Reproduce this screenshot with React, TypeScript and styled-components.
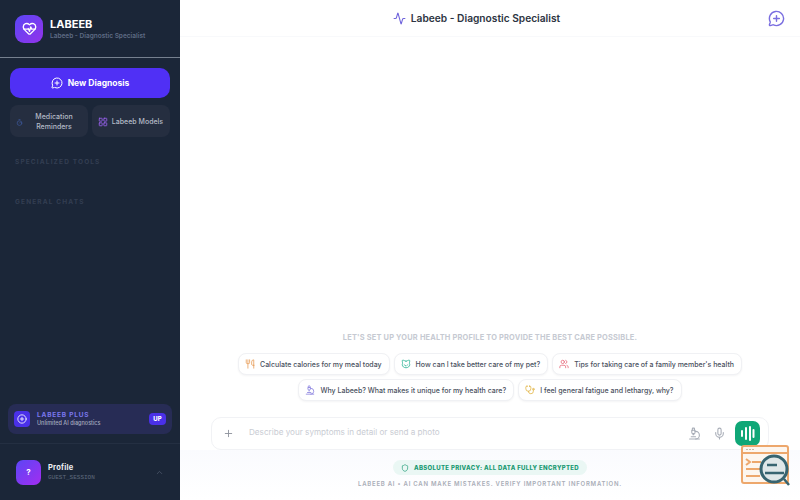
import styled, { createGlobalStyle } from "styled-components";
import {
  Activity,
  Cat,
  ChevronUp,
  CirclePlus,
  HeartPulse,
  LayoutGrid,
  MessageCirclePlus,
  Mic,
  Microscope,
  Plus,
  Shield,
  Stethoscope,
  Timer,
  Users,
  Utensils,
} from "lucide-react";

const GlobalStyle = createGlobalStyle`
  html, body {
    margin: 0;
    height: 100%;
    overflow: hidden;
  }
  body {
    font-family: "Inter", "Liberation Sans", sans-serif;
    background: #fff;
  }
  #root {
    height: 100%;
  }
  * {
    box-sizing: border-box;
  }
`;

const Page = styled.div`
  position: relative;
  display: flex;
  width: 800px;
  height: 500px;
  overflow: hidden;
`;

const Sidebar = styled.aside`
  display: flex;
  flex-direction: column;
  flex: 0 0 180px;
  width: 180px;
  height: 500px;
  background: #1b2638;
  box-shadow: 1px 0 3px rgba(30, 41, 59, 0.1);
`;

const Brand = styled.div`
  display: flex;
  align-items: center;
  gap: 8px;
  height: 58px;
  padding: 0 15px;
  border-bottom: 1px solid #76808f;
`;

const BrandLogo = styled.div`
  display: flex;
  align-items: center;
  justify-content: center;
  width: 28px;
  height: 28px;
  color: #fff;
  background: linear-gradient(135deg, #5b46f5, #9333ea);
  border-radius: 9px;
`;

const BrandText = styled.div`
  display: flex;
  flex-direction: column;
  gap: 1px;
  margin-left: -1px;
  margin-top: 1px;
`;

const BrandName = styled.div`
  color: #fff;
  font-size: 11px;
  font-weight: 700;
  line-height: 14px;
`;

const BrandSub = styled.div`
  color: #5e6b84;
  font-size: 6.5px;
  font-weight: 600;
  line-height: 9px;
  white-space: nowrap;
`;

const SideBody = styled.div`
  display: flex;
  flex-direction: column;
  flex: 1;
  padding: 10px 10px 0;
`;

const NewButton = styled.button`
  display: flex;
  align-items: center;
  justify-content: center;
  gap: 5px;
  width: 160px;
  height: 30px;
  padding: 0;
  color: #fff;
  font-family: inherit;
  font-size: 8.5px;
  font-weight: 700;
  background: #5030f5;
  border: none;
  border-radius: 10px;
`;

const QuickRow = styled.div`
  display: grid;
  grid-template-columns: 78px 78px;
  gap: 4px;
  margin-top: 7px;
`;

const QuickCard = styled.div`
  display: flex;
  align-items: center;
  gap: 3px;
  height: 32px;
  padding: 2px 6px 0;
  font-size: 7px;
  font-weight: 500;
  line-height: 10.5px;
  background: #252e40;
  border-radius: 8px;
`;

const QuickLabel = styled.span<{ $center?: boolean }>`
  flex: 1;
  color: #b4bac6;
  text-align: center;
  white-space: ${({ $center }) => ($center ? "normal" : "nowrap")};
`;

const QuickIcon = styled.span<{ $color: string }>`
  display: flex;
  flex-shrink: 0;
  color: ${({ $color }) => $color};
`;

const SectionTitle = styled.div<{ $gap: number }>`
  margin-top: ${({ $gap }) => $gap}px;
  padding-left: 5px;
  color: #333e52;
  font-size: 6.5px;
  font-weight: 700;
  letter-spacing: 1.15px;
  line-height: 9px;
`;

const PlusCard = styled.div`
  display: flex;
  align-items: center;
  gap: 7px;
  width: 164px;
  height: 30px;
  margin: auto 0 0 -2px;
  padding: 0 6px 0 6px;
  background: #272c55;
  border-radius: 8px;
`;

const PlusIcon = styled.div`
  display: flex;
  align-items: center;
  justify-content: center;
  width: 16px;
  height: 16px;
  color: #fff;
  background: #4a30e8;
  border-radius: 4px;
`;

const PlusText = styled.div`
  flex: 1;
`;

const PlusTitle = styled.div`
  color: #7b78ee;
  font-size: 6.5px;
  font-weight: 700;
  letter-spacing: 0.8px;
  line-height: 8px;
`;

const PlusSub = styled.div`
  color: #a4a9bd;
  font-size: 5.5px;
  font-weight: 500;
  line-height: 9px;
  white-space: nowrap;
`;

const UpBadge = styled.div`
  width: 17px;
  height: 12px;
  color: #fff;
  font-size: 6px;
  font-weight: 800;
  line-height: 12px;
  text-align: center;
  background: #4a30e8;
  border-radius: 4px;
`;

const ProfileRow = styled.div`
  display: flex;
  align-items: center;
  gap: 7px;
  height: 57px;
  margin-top: 9px;
  padding: 0 16px;
  border-top: 1px solid #242f42;
`;

const Avatar = styled.div`
  display: flex;
  align-items: center;
  justify-content: center;
  width: 25px;
  height: 25px;
  color: #fff;
  font-size: 8px;
  font-weight: 700;
  background: linear-gradient(135deg, #5b46f5, #a32df0);
  border-radius: 7px;
`;

const ProfileText = styled.div`
  flex: 1;
`;

const ProfileName = styled.div`
  color: #eef0f4;
  font-size: 7.5px;
  font-weight: 700;
  letter-spacing: 0.2px;
  line-height: 10px;
`;

const ProfileSub = styled.div`
  margin-top: 1px;
  color: #5f6a7d;
  font-family: "Liberation Mono", monospace;
  font-size: 6px;
  line-height: 8px;
`;

const Main = styled.main`
  display: flex;
  flex-direction: column;
  flex: 1;
  min-width: 0;
  background: #fff;
`;

const TopBar = styled.header`
  position: relative;
  display: flex;
  align-items: center;
  justify-content: center;
  gap: 5px;
  flex: 0 0 37px;
  padding-right: 27px;
  color: #2d3442;
  font-size: 10.2px;
  font-weight: 600;
  border-bottom: 1px solid #f8f9fb;
`;

const NewChatIcon = styled.span`
  position: absolute;
  top: 10px;
  right: 15px;
  display: flex;
  color: #7a6ee0;
`;

const ChatArea = styled.div`
  display: flex;
  flex-direction: column;
  align-items: center;
  justify-content: flex-end;
  flex: 1;
`;

const Prompt = styled.div`
  margin-bottom: 9px;
  color: #c6cad2;
  font-size: 7.4px;
  font-weight: 700;
  letter-spacing: 0.2px;
  line-height: 12px;
`;

const ChipRow = styled.div`
  display: flex;
  justify-content: center;
  gap: 4px;
  margin-bottom: 4px;
`;

const Chip = styled.div`
  display: flex;
  align-items: center;
  gap: 5px;
  height: 22px;
  padding: 0 7px 0 6px;
  color: #4a5160;
  font-size: 7px;
  font-weight: 500;
  white-space: nowrap;
  background: #fff;
  border: 1px solid #f0f1f4;
  border-radius: 8px;
  box-shadow: 0 1px 2px rgba(30, 41, 59, 0.05);
`;

const ChipIcon = styled.span<{ $color: string }>`
  display: flex;
  color: ${({ $color }) => $color};
`;

const Composer = styled.div`
  display: flex;
  align-items: center;
  width: 558px;
  height: 33px;
  margin-top: 12px;
  padding: 0 8px 0 11px;
  background: #fff;
  border: 1px solid #f1f2f5;
  border-radius: 10px;
`;

const ComposerText = styled.div`
  flex: 1;
  margin-left: 15px;
  padding-bottom: 3px;
  color: #c9ccd3;
  font-size: 8.15px;
`;

const ComposerIcon = styled.span<{ $gap: number }>`
  display: flex;
  margin-right: ${({ $gap }) => $gap}px;
  color: #a8adb7;
`;

const VoiceButton = styled.div`
  display: flex;
  align-items: center;
  justify-content: center;
  width: 25px;
  height: 25px;
  color: #fff;
  background: #10a777;
  border-radius: 7px;
`;

const Footer = styled.div`
  display: flex;
  flex-direction: column;
  align-items: center;
  flex: 0 0 50px;
  padding-top: 10px;
  background: linear-gradient(180deg, #fafbfe, #fff);
`;

const PrivacyPill = styled.div`
  display: flex;
  align-items: center;
  gap: 5px;
  height: 15px;
  padding: 0 8px;
  color: #189a72;
  font-size: 6px;
  font-weight: 800;
  letter-spacing: 0.33px;
  background: #eaf7f4;
  border-radius: 8px;
`;

const Disclaimer = styled.div`
  margin-top: 4px;
  color: #a9adb7;
  font-size: 6px;
  font-weight: 600;
  letter-spacing: 0.75px;
  line-height: 9px;
`;

const Watermark = styled.svg`
  position: absolute;
  right: 9px;
  bottom: 11px;
`;

const App = () => {
  return (
    <Page>
      <GlobalStyle />
      <Sidebar>
        <Brand>
          <BrandLogo>
            <HeartPulse size={15} strokeWidth={2.2} />
          </BrandLogo>
          <BrandText>
            <BrandName>LABEEB</BrandName>
            <BrandSub>Labeeb - Diagnostic Specialist</BrandSub>
          </BrandText>
        </Brand>
        <SideBody>
          <NewButton>
            <MessageCirclePlus size={12} />
            New Diagnosis
          </NewButton>
          <QuickRow>
            <QuickCard>
              <QuickIcon $color="#4160ad">
                <Timer size={7} />
              </QuickIcon>
              <QuickLabel $center>Medication Reminders</QuickLabel>
            </QuickCard>
            <QuickCard>
              <QuickIcon $color="#9a63f0">
                <LayoutGrid size={10} />
              </QuickIcon>
              <QuickLabel>Labeeb Models</QuickLabel>
            </QuickCard>
          </QuickRow>
          <SectionTitle $gap={21}>SPECIALIZED TOOLS</SectionTitle>
          <SectionTitle $gap={31}>GENERAL CHATS</SectionTitle>
          <PlusCard>
            <PlusIcon>
              <CirclePlus size={10} />
            </PlusIcon>
            <PlusText>
              <PlusTitle>LABEEB PLUS</PlusTitle>
              <PlusSub>Unlimited AI diagnostics</PlusSub>
            </PlusText>
            <UpBadge>UP</UpBadge>
          </PlusCard>
        </SideBody>
        <ProfileRow>
          <Avatar>?</Avatar>
          <ProfileText>
            <ProfileName>Profile</ProfileName>
            <ProfileSub>GUEST_SESSION</ProfileSub>
          </ProfileText>
          <ChevronUp size={9} color="#4f5a6d" />
        </ProfileRow>
      </Sidebar>
      <Main>
        <TopBar>
          <Activity size={13} color="#6f63dc" />
          Labeeb - Diagnostic Specialist
          <NewChatIcon>
            <MessageCirclePlus size={17} />
          </NewChatIcon>
        </TopBar>
        <ChatArea>
          <Prompt>LET'S SET UP YOUR HEALTH PROFILE TO PROVIDE THE BEST CARE POSSIBLE.</Prompt>
          <ChipRow>
            <Chip>
              <ChipIcon $color="#e8a15f">
                <Utensils size={10} />
              </ChipIcon>
              Calculate calories for my meal today
            </Chip>
            <Chip>
              <ChipIcon $color="#2cb596">
                <Cat size={10} />
              </ChipIcon>
              How can I take better care of my pet?
            </Chip>
            <Chip>
              <ChipIcon $color="#e76f7f">
                <Users size={10} />
              </ChipIcon>
              Tips for taking care of a family member's health
            </Chip>
          </ChipRow>
          <ChipRow>
            <Chip>
              <ChipIcon $color="#8d84e0">
                <Microscope size={10} />
              </ChipIcon>
              Why Labeeb? What makes it unique for my health care?
            </Chip>
            <Chip>
              <ChipIcon $color="#e3b84d">
                <Stethoscope size={10} />
              </ChipIcon>
              I feel general fatigue and lethargy, why?
            </Chip>
          </ChipRow>
          <Composer>
            <Plus size={11} color="#8e939d" />
            <ComposerText>Describe your symptoms in detail or send a photo</ComposerText>
            <ComposerIcon $gap={12}>
              <Microscope size={13} />
            </ComposerIcon>
            <ComposerIcon $gap={9}>
              <Mic size={13} />
            </ComposerIcon>
            <VoiceButton>
              <svg width="15" height="17" viewBox="0 0 15 17" fill="none" stroke="currentColor" strokeWidth="2" strokeLinecap="round">
                <path d="M2 6v5M6 3v11M10 2v13M13.5 5v7" />
              </svg>
            </VoiceButton>
          </Composer>
        </ChatArea>
        <Footer>
          <PrivacyPill>
            <Shield size={8} />
            ABSOLUTE PRIVACY: ALL DATA FULLY ENCRYPTED
          </PrivacyPill>
          <Disclaimer>LABEEB AI • AI CAN MAKE MISTAKES. VERIFY IMPORTANT INFORMATION.</Disclaimer>
        </Footer>
      </Main>
      <Watermark width="50" height="44" viewBox="0 0 50 44" fill="none">
        <rect x="1" y="1" width="46" height="37" rx="2" fill="#fdf6ef" stroke="#eda76c" strokeWidth="2" />
        <path d="M1 8h46" stroke="#eda76c" strokeWidth="2" />
        <path d="M5 4.5h8" stroke="#c9b9a8" strokeWidth="1" strokeDasharray="2 1" />
        <path d="M5 14l4 3-4 3M11 17h9M5 24h16M5 31h14" stroke="#eda76c" strokeWidth="2" />
        <circle cx="33" cy="24" r="13" fill="#dfe7e8" stroke="#376470" strokeWidth="3" />
        <path d="M26 20h10M24 28h19M43 34l5 6" stroke="#376470" strokeWidth="2.5" />
      </Watermark>
    </Page>
  );
};

export default App;
